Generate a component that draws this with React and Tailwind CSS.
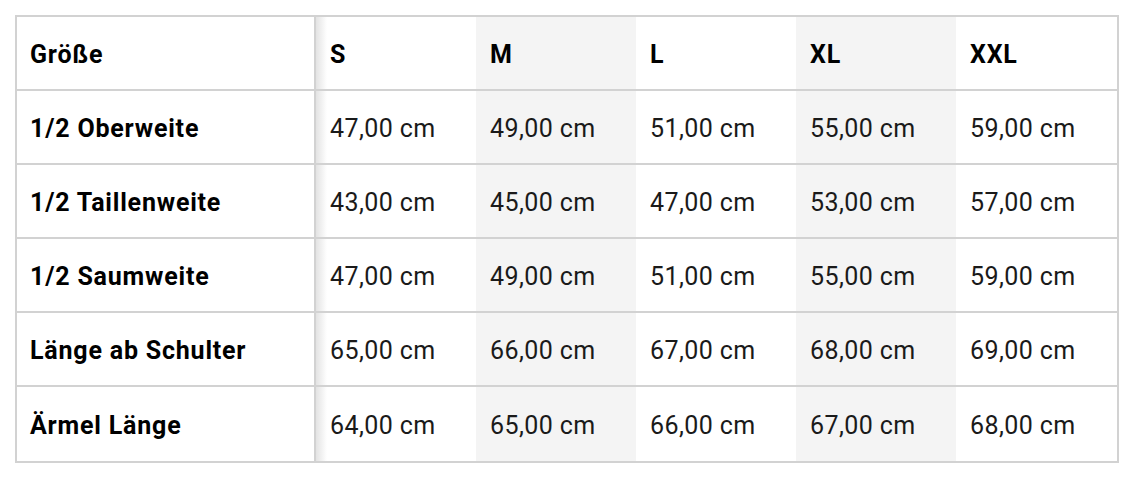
const sizes = ['S', 'M', 'L', 'XL', 'XXL'];

const rows = [
  ['1/2 Oberweite', ['47,00', '49,00', '51,00', '55,00', '59,00']],
  ['1/2 Taillenweite', ['43,00', '45,00', '47,00', '53,00', '57,00']],
  ['1/2 Saumweite', ['47,00', '49,00', '51,00', '55,00', '59,00']],
  ['Länge ab Schulter', ['65,00', '66,00', '67,00', '68,00', '69,00']],
  ['Ärmel Länge', ['64,00', '65,00', '66,00', '67,00', '68,00']],
];

function cellBg(i) {
  if (i === 0) return 'bg-[linear-gradient(to_right,#e3e3e3,#ffffff_11px)]';
  if (i === 1 || i === 3) return 'bg-[#f4f4f4]';
  return 'bg-white';
}

function Row({ label, values, header, last }) {
  return (
    <div className={`flex h-[74px] ${last ? '' : 'border-b-2 border-[#d2d2d2]'}`}>
      <div className="w-[299px] shrink-0 flex items-center pl-[13px] pt-[3px] border-r-2 border-[#d2d2d2] font-bold text-[25px] tracking-[0.8px] text-black">
        {label}
      </div>
      {values.map((v, i) => (
        <div
          key={i}
          className={`${i === 4 ? 'w-[161px]' : 'w-[160px]'} shrink-0 flex items-center pl-[14px] pt-[3px] text-[25px] ${cellBg(i)} ${
            header ? 'font-bold tracking-[0.8px] text-black' : 'tracking-[0.4px] text-[#1a1a1a]'
          }`}
        >
          {header ? v : `${v} cm`}
        </div>
      ))}
    </div>
  );
}

export default function App() {
  return (
    <div className="w-[1148px] h-[484px] bg-white pt-[15px] pl-[15px]" style={{ fontFamily: 'Roboto, "Liberation Sans", sans-serif' }}>
      <div className="w-[1104px] border-2 border-[#d2d2d2]">
        <Row label="Größe" values={sizes} header />
        {rows.map(([label, values], i) => (
          <Row key={label} label={label} values={values} last={i === rows.length - 1} />
        ))}
      </div>
    </div>
  );
}
